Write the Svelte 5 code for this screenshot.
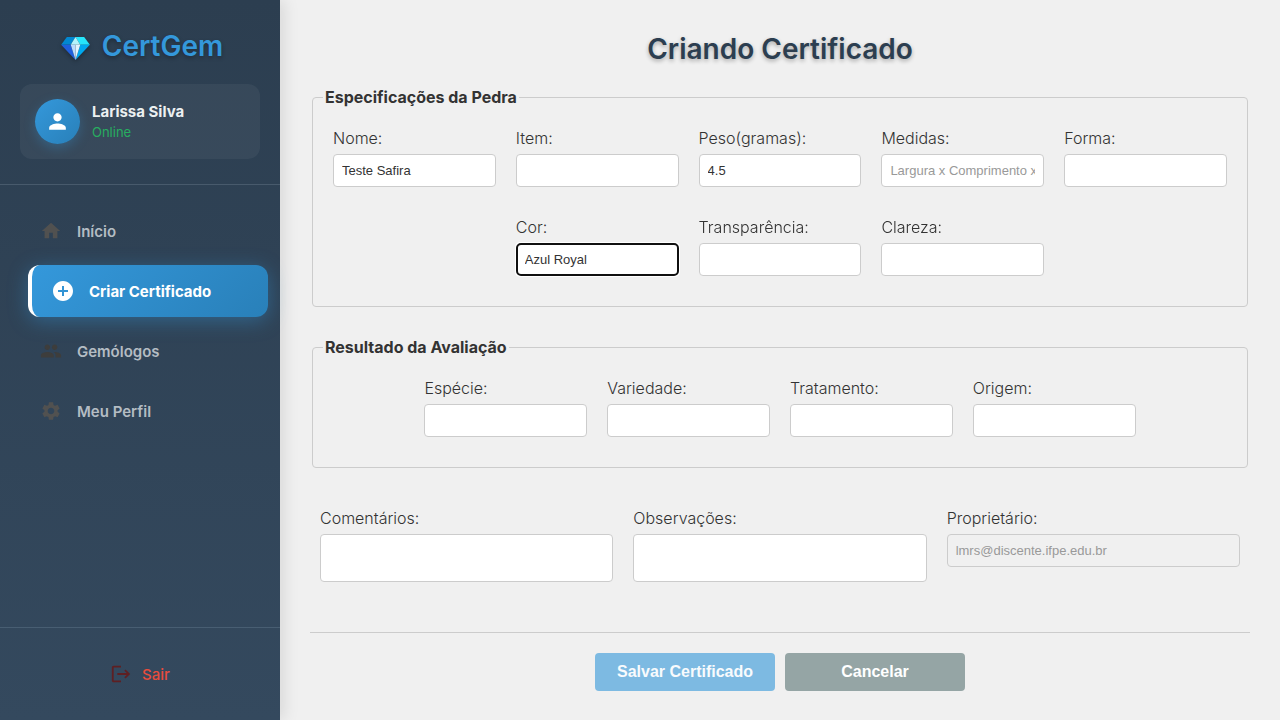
<script>
  import { onMount } from 'svelte';

  const nav = [
    { label: 'Início', tone: 'soft', path: 'M10 20v-6h4v6h5v-8h3L12 3 2 12h3v8z' },
    {
      label: 'Criar Certificado',
      active: true,
      path: 'M12 2C6.48 2 2 6.48 2 12s4.48 10 10 10 10-4.48 10-10S17.52 2 12 2zm5 11h-4v4h-2v-4H7v-2h4V7h2v4h4v2z'
    },
    {
      label: 'Gemólogos',
      tone: 'dark',
      path: 'M16 11c1.66 0 2.99-1.34 2.99-3S17.66 5 16 5s-3 1.34-3 3 1.34 3 3 3zm-8 0c1.66 0 2.99-1.34 2.99-3S9.66 5 8 5 5 6.34 5 8s1.34 3 3 3zm0 2c-2.33 0-7 1.17-7 3.5V19h14v-2.500c0-2.330-4.670-3.500-7-3.500zm8 0c-.29 0-.62.020-.97.050 1.160.840 1.970 1.970 1.970 3.450V19h6v-2.500c0-2.330-4.670-3.500-7-3.500z'
    },
    {
      label: 'Meu Perfil',
      tone: 'soft',
      path: 'M19.140 12.940c.040-.300.060-.610.060-.940 0-.320-.020-.640-.070-.940l2.030-1.580c.180-.140.230-.410.120-.610l-1.920-3.320c-.120-.220-.370-.290-.590-.220l-2.390.960c-.500-.380-1.030-.700-1.620-.940l-.360-2.540c-.040-.240-.240-.410-.480-.410h-3.840c-.240 0-.430.170-.470.410l-.360 2.540c-.590.240-1.130.570-1.620.940l-2.390-.960c-.220-.080-.470 0-.590.220L2.740 8.870c-.120.210-.080.470.120.610l2.030 1.580c-.050.300-.090.630-.090.940s.020.640.070.940l-2.030 1.580c-.180.140-.230.410-.120.610l1.920 3.320c.120.220.370.290.590.220l2.390-.960c.500.380 1.030.700 1.620.940l.360 2.540c.050.240.240.410.480.410h3.840c.240 0 .440-.170.470-.410l.360-2.540c.590-.240 1.130-.560 1.620-.940l2.390.960c.220.080.470 0 .590-.220l1.920-3.320c.120-.220.070-.470-.120-.610l-2.010-1.580zM12 15.600c-1.980 0-3.600-1.620-3.600-3.600s1.620-3.600 3.600-3.600 3.600 1.620 3.600 3.600-1.620 3.600-3.600 3.600z'
    }
  ];

  const groups = [
    {
      title: 'Especificações da Pedra',
      fields: [
        { id: 'nome', label: 'Nome:', value: 'Teste Safira' },
        { id: 'item', label: 'Item:' },
        { id: 'peso', label: 'Peso(gramas):', value: '4.5' },
        { id: 'medidas', label: 'Medidas:', placeholder: 'Largura x Comprimento x Altura' },
        { id: 'forma', label: 'Forma:' },
        { id: 'cor', label: 'Cor:', value: 'Azul Royal' },
        { id: 'transparencia', label: 'Transparência:' },
        { id: 'clareza', label: 'Clareza:' }
      ]
    },
    {
      title: 'Resultado da Avaliação',
      fields: [
        { id: 'especie', label: 'Espécie:' },
        { id: 'variedade', label: 'Variedade:' },
        { id: 'tratamento', label: 'Tratamento:' },
        { id: 'origem', label: 'Origem:' }
      ]
    }
  ];

  onMount(() => {
    const cor = document.getElementById('cor');
    cor.focus();
    cor.setSelectionRange(cor.value.length, cor.value.length);
  });
</script>

<div class="layout">
  <aside class="sidebar">
    <header class="top">
      <div class="brand">
        <svg class="gem" viewBox="0 0 30 24" aria-hidden="true">
          <path fill="#0288d1" d="M6 0h9l-5 8H0z" />
          <path fill="#26e5fb" d="M15 0h9l6 8H20z" />
          <path fill="#1f5fdc" d="M0 8h10l5 16z" />
          <path fill="#00a9f0" d="M20 8h10L15 24z" />
          <path fill="#b3f3fb" d="M15 0l5 8H10z" />
          <path fill="#b9dcff" d="M10 8h5v16z" />
          <path fill="#e0f3ff" d="M15 8h5l-5 16z" />
        </svg>
        <span>CertGem</span>
      </div>
      <div class="user">
        <div class="avatar">
          <svg viewBox="0 0 24 24" aria-hidden="true">
            <path d="M12 12c2.210 0 4-1.790 4-4s-1.790-4-4-4-4 1.790-4 4 1.790 4 4 4zm0 2c-2.670 0-8 1.340-8 4v2h16v-2c0-2.660-5.330-4-8-4z" />
          </svg>
        </div>
        <div class="who">
          <strong>Larissa Silva</strong>
          <span>Online</span>
        </div>
      </div>
    </header>

    <nav>
      {#each nav as item}
        <a href="#top" class={item.active ? 'active' : item.tone} aria-current={item.active ? 'page' : undefined}>
          <svg viewBox="0 0 24 24" aria-hidden="true"><path d={item.path} /></svg>
          <span>{item.label}</span>
        </a>
      {/each}
    </nav>

    <footer>
      <button type="button" class="logout">
        <svg viewBox="0 0 24 24" aria-hidden="true">
          <path d="M17 7l-1.410 1.410L18.170 11H8v2h10.170l-2.580 2.580L17 17l5-5zM4 5h8V3H4c-1.100 0-2 .900-2 2v14c0 1.100.900 2 2 2h8v-2H4V5z" />
        </svg>
        <span>Sair</span>
      </button>
    </footer>
  </aside>

  <main>
    <h1>Criando Certificado</h1>
    <form>
      {#each groups as group}
        <fieldset>
          <legend>{group.title}</legend>
          <div class="grid">
            {#each group.fields as field}
              <div class="field">
                <label for={field.id}>{field.label}</label>
                <input id={field.id} type="text" value={field.value ?? ''} placeholder={field.placeholder} spellcheck="false" autocomplete="off" />
              </div>
            {/each}
          </div>
        </fieldset>
      {/each}

      <div class="extras">
        <div class="field">
          <label for="comentarios">Comentários:</label>
          <textarea id="comentarios"></textarea>
        </div>
        <div class="field">
          <label for="observacoes">Observações:</label>
          <textarea id="observacoes"></textarea>
        </div>
        <div class="field">
          <label for="proprietario">Proprietário:</label>
          <input id="proprietario" type="text" value="lmrs@discente.ifpe.edu.br" disabled />
        </div>
      </div>

      <div class="actions">
        <button type="submit" class="save" disabled>Salvar Certificado</button>
        <button type="button" class="cancel">Cancelar</button>
      </div>
    </form>
  </main>
</div>

<style>
  :global(body) {
    margin: 0;
    background: #f0f0f0;
  }

  .layout {
    display: flex;
    min-height: 100vh;
    font-family: Inter, 'Liberation Sans', sans-serif;
    font-size: 16px;
    color: #333;
  }

  .layout * {
    box-sizing: border-box;
  }

  /* Sidebar */
  .sidebar {
    flex: 0 0 280px;
    display: flex;
    flex-direction: column;
    background: linear-gradient(180deg, #2c3e50 0%, #34495e 100%);
    box-shadow: 4px 0 15px rgba(0, 0, 0, 0.1);
  }

  .top {
    padding: 28px 20px 25px;
    border-bottom: 1px solid #485a6c;
  }

  .brand {
    display: flex;
    align-items: center;
    justify-content: center;
    gap: 12px;
    margin-bottom: 20px;
    padding-left: 4px;
    color: #3498db;
    font-size: 28px;
    font-weight: 600;
    line-height: 36px;
    text-shadow: 0 2px 4px rgba(0, 0, 0, 0.3);
  }

  .gem {
    width: 29px;
    height: 23px;
    margin-top: 4px;
    filter: drop-shadow(0 2px 2px rgba(0, 0, 0, 0.3));
  }

  .user {
    display: flex;
    align-items: center;
    gap: 12px;
    padding: 15px;
    border-radius: 12px;
    background: rgba(255, 255, 255, 0.05);
  }

  .avatar {
    display: flex;
    align-items: center;
    justify-content: center;
    width: 45px;
    height: 45px;
    border-radius: 50%;
    background: linear-gradient(135deg, #3498db, #2980b9);
    box-shadow: 0 4px 12px rgba(52, 152, 219, 0.3);
  }

  .avatar svg {
    width: 25px;
    height: 25px;
    fill: #fff;
  }

  .who {
    display: flex;
    flex-direction: column;
    line-height: 20px;
  }

  .who strong {
    color: #ecf0f1;
    font-size: 15px;
    font-weight: 700;
  }

  .who span {
    color: #27ae60;
    font-size: 13px;
    font-weight: 400;
  }

  nav {
    flex: 1;
    display: flex;
    flex-direction: column;
    gap: 8px;
    padding: 20px;
  }

  nav a {
    display: flex;
    align-items: center;
    gap: 15px;
    height: 52px;
    padding: 0 20px;
    border-radius: 12px;
    color: #b4bcc3;
    font-size: 15px;
    font-weight: 600;
    text-decoration: none;
  }

  nav svg,
  .logout svg {
    flex: none;
    width: 22px;
    height: 22px;
    fill: currentColor;
  }

  .soft svg {
    fill: #515150;
  }

  .dark svg {
    fill: #3d3d3c;
  }

  nav .active {
    margin: 0 -8px 0 8px;
    border-left: 4px solid #fff;
    color: #fff;
    background: linear-gradient(135deg, #3498db, #2980b9);
    box-shadow: 0 4px 20px rgba(52, 152, 219, 0.4);
    font-weight: 700;
  }

  .active svg {
    width: 24px;
    height: 24px;
    margin: 0 -1px;
  }

  .sidebar footer {
    padding: 20px;
    border-top: 1px solid #485e72;
  }

  .logout {
    display: flex;
    align-items: center;
    justify-content: center;
    gap: 10px;
    width: 100%;
    height: 52px;
    border: 0;
    background: none;
    color: #e74c3c;
    font: 500 15px Inter, 'Liberation Sans', sans-serif;
  }

  .logout svg {
    fill: #5e1f22;
  }

  /* Form */
  main {
    flex: 1;
    min-width: 0;
    padding: 30px 30px 28px;
  }

  h1 {
    margin: 0 0 29px;
    color: #2c3e50;
    font-size: 28px;
    font-weight: 600;
    line-height: 38px;
    text-align: center;
    text-shadow: 0 2px 4px rgba(0, 0, 0, 0.3);
  }

  form {
    display: flex;
    flex-direction: column;
  }

  fieldset {
    min-width: 0;
    margin: -10px 2px 40px;
    padding: 21px 10px 30px;
    border: 1px solid #ccc;
    border-radius: 4px;
  }

  legend {
    padding: 0 2px;
    font-weight: 700;
    line-height: 20px;
  }

  .grid {
    display: flex;
    flex-wrap: wrap;
    justify-content: center;
    gap: 30px 20px;
    padding: 0 10px;
  }

  .grid .field {
    flex: 0 0 calc((100% - 80px) / 5);
  }

  .field {
    display: flex;
    flex-direction: column;
    gap: 5px;
    min-width: 0;
  }

  label {
    font-weight: 300;
    line-height: 21px;
    white-space: nowrap;
  }

  input,
  textarea {
    width: 100%;
    padding: 8px;
    border: 1px solid #ccc;
    border-radius: 4px;
    background: #fff;
    color: #333;
    font: 13px/15px 'Liberation Sans', Arial, sans-serif;
  }

  input {
    height: 33px;
  }

  textarea {
    display: block;
    height: 48px;
    resize: none;
  }

  input::placeholder {
    color: #999;
  }

  input:disabled {
    background: #f0f0f0;
    color: #999;
  }

  .extras {
    display: grid;
    grid-template-columns: repeat(3, minmax(0, 1fr));
    gap: 20px;
    padding: 0 10px 50px;
  }

  .actions {
    display: flex;
    justify-content: center;
    gap: 10px;
    padding-top: 20px;
    border-top: 1px solid #ccc;
  }

  .actions button {
    width: 180px;
    height: 38px;
    border: 0;
    border-radius: 4px;
    color: #fff;
    font: bold 16px 'Liberation Sans', Arial, sans-serif;
  }

  .actions .save {
    background: #7dbae2;
    color: #f8fbfd;
  }

  .actions .cancel {
    background: #95a5a5;
  }
</style>
